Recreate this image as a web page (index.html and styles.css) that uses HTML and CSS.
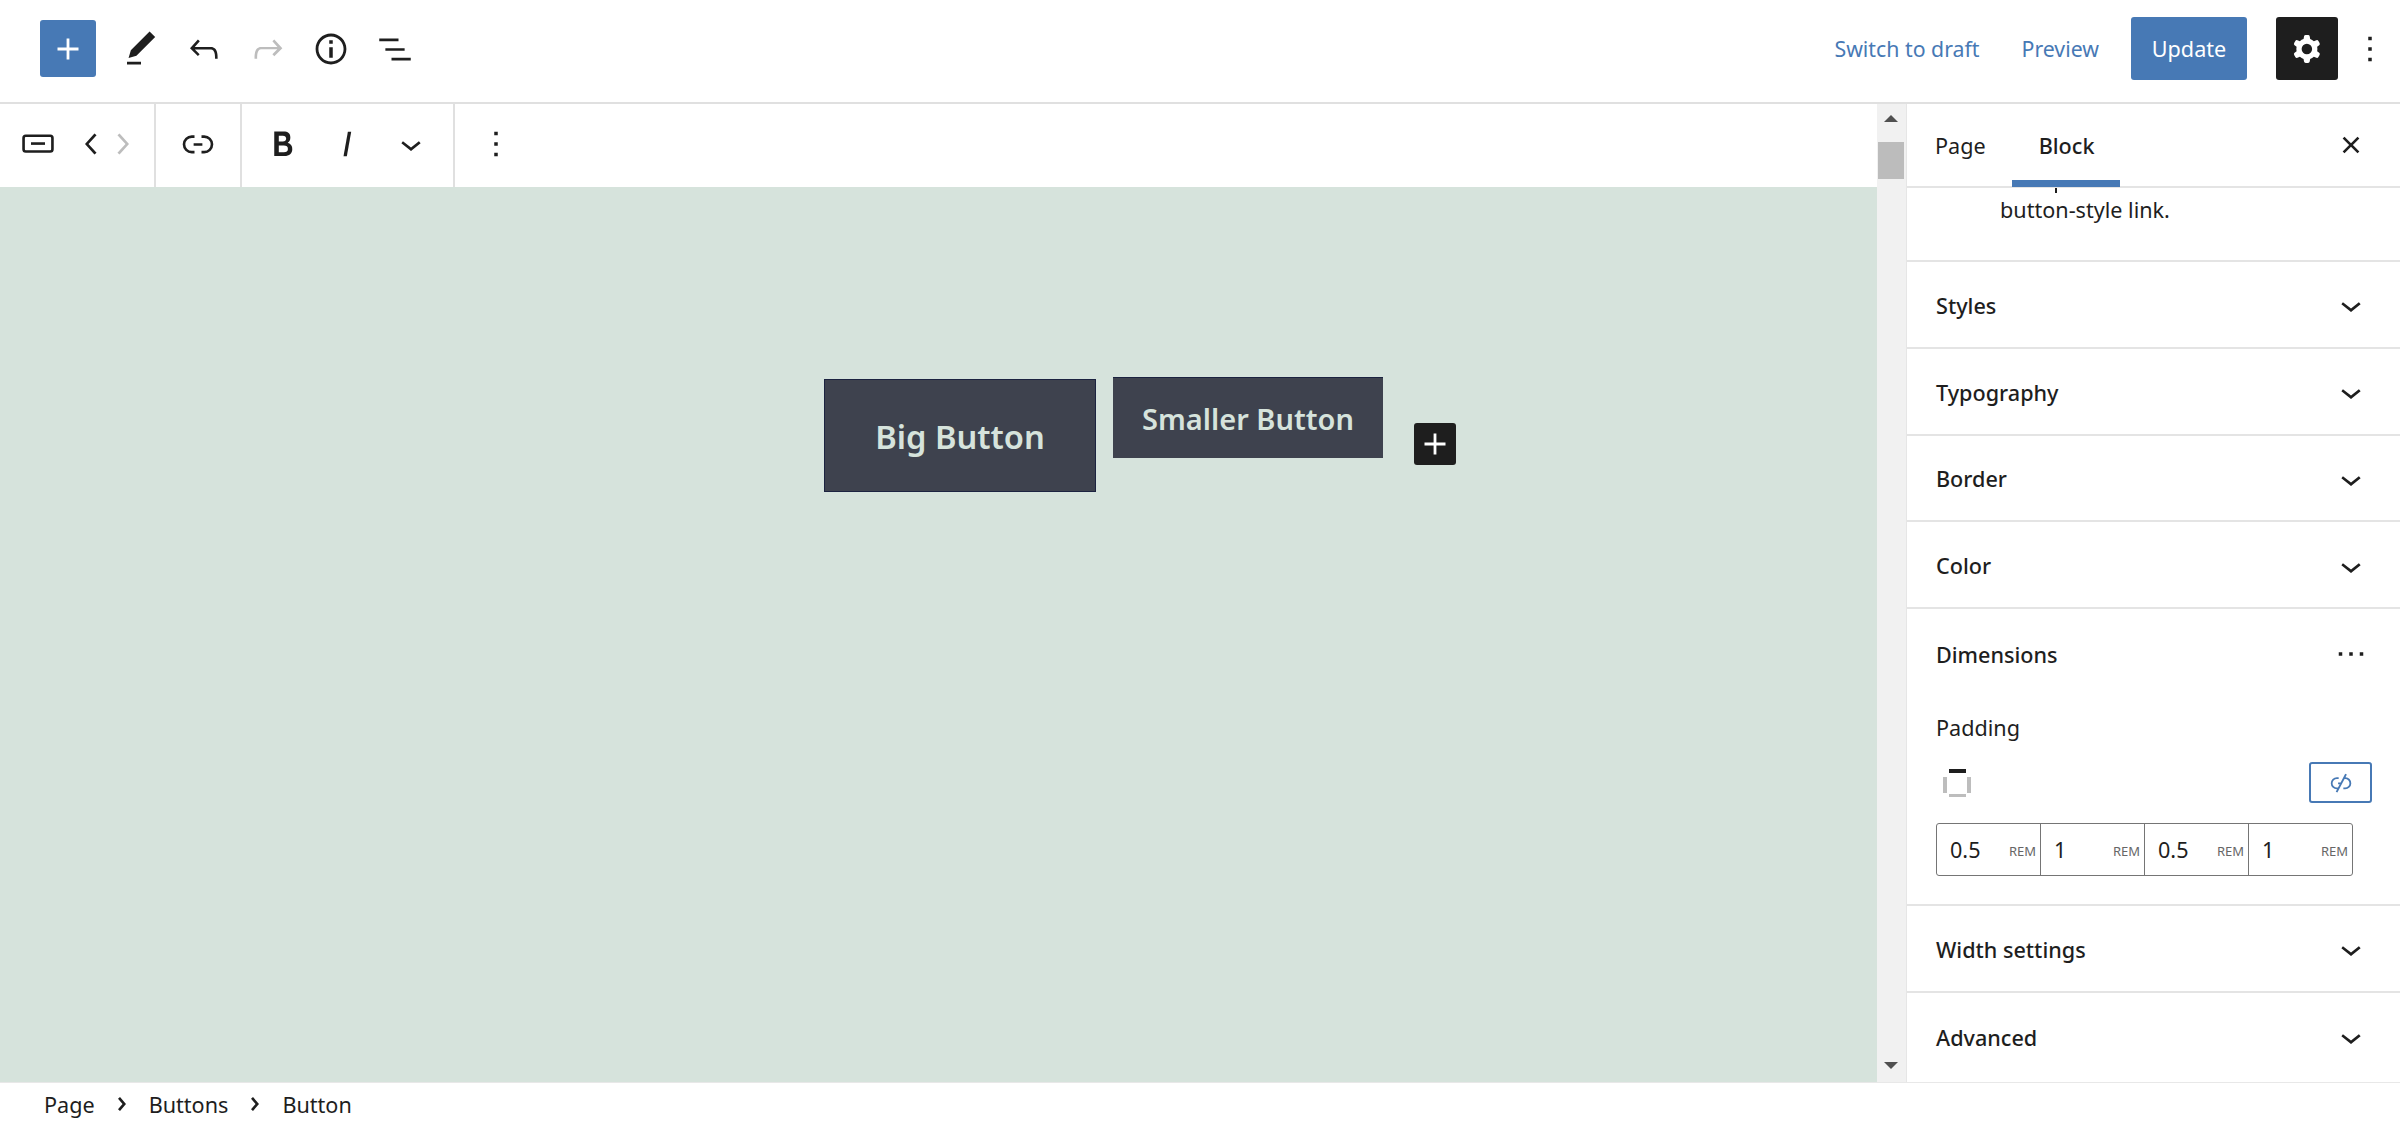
FILE: index.html
```html
<!DOCTYPE html>
<html lang="en">
<head>
    <meta charset="UTF-8">
    <title>Edit Page</title>
    <link rel="stylesheet" href="styles.css">
</head>
<body>

<header class="top-bar">
    <button class="inserter"><svg class="icon" viewBox="0 0 24 24"><path d="M18 11.2h-5.2V6h-1.6v5.2H6v1.6h5.2V18h1.6v-5.2H18z"/></svg></button>
    <div class="top-tools">
        <span class="tool"><svg class="icon" viewBox="0 0 24 24"><path d="M20.1 5.1L16.9 2 6.2 12.7l-1.3 4.4 4.5-1.3L20.1 5.1zM4 20.8h8v-1.5H4v1.5z"/></svg></span>
        <span class="tool"><svg class="icon" viewBox="0 0 24 24"><path d="M18.3 11.7c-.6-.6-1.4-.9-2.3-.9H6.7l2.9-3.3-1.1-1-4.5 5L8.5 16l1-1-2.7-2.7H16c.5 0 .9.2 1.3.5 1 1 1 3.4 1 4.5v.3h1.5v-.2c0-1.5 0-4.3-1.5-5.7z"/></svg></span>
        <span class="tool disabled"><svg class="icon" viewBox="0 0 24 24"><path d="M15.6 6.5l-1.1 1 2.9 3.3H8c-.9 0-1.7.3-2.3.9-1.4 1.5-1.4 4.2-1.4 5.6v.2h1.5v-.3c0-1.1 0-3.5 1-4.5.3-.3.7-.5 1.3-.5h9.2L14.5 15l1.1 1.1 4.6-4.6-4.6-5z"/></svg></span>
        <span class="tool"><svg class="icon" viewBox="0 0 24 24"><path d="M12 3.2c-4.8 0-8.8 3.9-8.8 8.8 0 4.8 3.9 8.8 8.8 8.8 4.8 0 8.8-3.9 8.8-8.8 0-4.8-4-8.8-8.8-8.8zm0 16c-4 0-7.2-3.3-7.2-7.2C4.8 8 8 4.8 12 4.8s7.2 3.3 7.2 7.2c0 4-3.2 7.2-7.2 7.2zM11 17h2v-6h-2v6zm0-8h2V7h-2v2z"/></svg></span>
        <span class="tool"><svg class="icon" viewBox="0 0 24 24"><path d="M3 6h11v1.5H3V6zm3.5 5.500h11V13h-11v-1.500zM21 17H10v1.500h11V17z"/></svg></span>
    </div>
    <div class="top-actions">
        <a class="link-btn draft">Switch to draft</a>
        <a class="link-btn preview">Preview</a>
        <button class="update">Update</button>
        <button class="settings"><svg class="icon" viewBox="0 0 24 24"><path fill-rule="evenodd" clip-rule="evenodd" d="M10.289 4.836A1 1 0 0111.275 4h1.306a1 1 0 01.987.836l.244 1.466c.787.26 1.503.679 2.108 1.218l1.393-.522a1 1 0 011.216.437l.653 1.13a1 1 0 01-.23 1.273l-1.148.944a6.025 6.025 0 010 2.435l1.149.946a1 1 0 01.23 1.272l-.653 1.13a1 1 0 01-1.216.437l-1.394-.522c-.605.54-1.32.958-2.108 1.218l-.244 1.466a1 1 0 01-.987.836h-1.306a1 1 0 01-.986-.836l-.244-1.466a5.995 5.995 0 01-2.108-1.218l-1.394.522a1 1 0 01-1.217-.436l-.653-1.131a1 1 0 01.23-1.272l1.149-.946a6.026 6.026 0 010-2.435l-1.148-.944a1 1 0 01-.23-1.272l.653-1.131a1 1 0 011.217-.437l1.393.522a5.994 5.994 0 012.108-1.218l.244-1.466zM14.929 12a3 3 0 11-6 0 3 3 0 016 0z"/></svg></button>
        <span class="top-more"><svg class="icon" viewBox="0 0 24 24"><path d="M13 19h-2v-2h2v2zm0-6h-2v-2h2v2zm0-6h-2V5h2v2z"/></svg></span>
    </div>
</header>

<main class="workspace">
    <section class="editor">
        <div class="block-toolbar">
            <div class="tb-group first">
                <span class="tb-btn block-type"><svg class="icon" viewBox="0 0 24 24"><path d="M8 12.500h8V11H8v1.500Z"/><path d="M19 6.500H5a2 2 0 0 0-2 2V15a2 2 0 0 0 2 2h14a2 2 0 0 0 2-2V8.500a2 2 0 0 0-2-2Zm.5 8.500a.5.5 0 0 1-.5.5H5a.5.5 0 0 1-.5-.5V8.500A.5.5 0 0 1 5 8h14a.5.5 0 0 1 .5.5V15Z"/></svg></span>
                <span class="tb-btn mover"><svg class="icon" viewBox="0 0 24 24"><path d="M14.6 7l-1.2-1L8 12l5.4 6 1.2-1-4.6-5z"/></svg></span>
                <span class="tb-btn mover disabled"><svg class="icon" viewBox="0 0 24 24"><path d="M10.6 6L9.4 7l4.6 5-4.6 5 1.2 1 5.4-6z"/></svg></span>
            </div>
            <div class="tb-group link-group">
                <span class="tb-btn wide"><svg class="icon" viewBox="0 0 24 24"><path d="M10 17.389H8.444A5.194 5.194 0 1 1 8.444 7H10v1.500H8.444a3.694 3.694 0 0 0 0 7.389H10v1.500ZM14 7h1.556a5.194 5.194 0 0 1 0 10.390H14v-1.500h1.556a3.694 3.694 0 0 0 0-7.390H14V7Zm-4.500 6h5v-1.500h-5V13Z"/></svg></span>
            </div>
            <div class="tb-group format-group">
                <span class="tb-btn"><svg class="icon" viewBox="0 0 24 24"><path d="M14.7 11.3c1-.6 1.5-1.6 1.5-3 0-2.3-1.3-3.4-4-3.4H7v14h5.8c1.4 0 2.5-.3 3.3-1 .8-.7 1.2-1.7 1.2-2.9.1-1.9-.8-3.1-2.6-3.7zm-5.1-4h2.3c.6 0 1.1.1 1.4.4.3.3.5.7.5 1.2s-.2 1-.5 1.2c-.3.3-.8.4-1.4.4H9.6V7.3zm4.6 9c-.4.3-1 .4-1.7.4H9.6v-3.9h2.9c.7 0 1.3.2 1.7.5.4.3.6.8.6 1.5s-.2 1.2-.6 1.5z"/></svg></span>
                <span class="tb-btn"><svg class="icon" viewBox="0 0 24 24"><path d="M12.5 5L10 19h1.9l2.5-14z"/></svg></span>
                <span class="tb-btn"><svg class="icon" viewBox="0 0 24 24"><path d="M17.5 11.6L12 16l-5.5-4.4.9-1.2L12 14l4.5-3.6 1 1.2z"/></svg></span>
            </div>
            <div class="tb-group more-group">
                <span class="tb-btn"><svg class="icon" viewBox="0 0 24 24"><path d="M13 19h-2v-2h2v2zm0-6h-2v-2h2v2zm0-6h-2V5h2v2z"/></svg></span>
            </div>
        </div>

        <div class="canvas">
            <a class="wp-btn big">Big Button</a>
            <a class="wp-btn small">Smaller Button</a>
            <button class="appender"><svg class="icon" viewBox="0 0 24 24"><path d="M18 11.2h-5.2V6h-1.6v5.2H6v1.6h5.2V18h1.6v-5.2H18z"/></svg></button>
        </div>
    </section>

    <div class="scrollbar">
        <span class="arrow-up"></span>
        <span class="thumb"></span>
        <span class="arrow-down"></span>
    </div>

    <aside class="sidebar">
        <div class="tabs">
            <span class="tab">Page</span>
            <span class="tab active">Block</span>
            <span class="close"><svg class="icon" viewBox="0 0 24 24"><path d="M12 13.06l3.712 3.713 1.061-1.06L13.061 12l3.712-3.712-1.06-1.06L12 10.938 8.288 7.227l-1.061 1.06L10.939 12l-3.712 3.712 1.06 1.061L12 13.061z"/></svg></span>
        </div>
        <div class="block-desc">
            <i class="clipped-mark"></i>
            <p>button-style link.</p>
        </div>

        <div class="panel-row"><span>Styles</span><svg class="icon" viewBox="0 0 24 24"><path d="M17.5 11.6L12 16l-5.5-4.4.9-1.2L12 14l4.5-3.6 1 1.2z"/></svg></div>
        <div class="panel-row"><span>Typography</span><svg class="icon" viewBox="0 0 24 24"><path d="M17.5 11.6L12 16l-5.5-4.4.9-1.2L12 14l4.5-3.6 1 1.2z"/></svg></div>
        <div class="panel-row"><span>Border</span><svg class="icon" viewBox="0 0 24 24"><path d="M17.5 11.6L12 16l-5.5-4.4.9-1.2L12 14l4.5-3.6 1 1.2z"/></svg></div>
        <div class="panel-row"><span>Color</span><svg class="icon" viewBox="0 0 24 24"><path d="M17.5 11.6L12 16l-5.5-4.4.9-1.2L12 14l4.5-3.6 1 1.2z"/></svg></div>

        <div class="dimensions">
            <div class="dim-title"><span>Dimensions</span><svg class="icon" viewBox="0 0 24 24"><path d="M11 13h2v-2h-2v2zm-6 0h2v-2H5v2zm12-2v2h2v-2h-2z"/></svg></div>
            <div class="dim-label">Padding</div>
            <div class="dim-controls">
                <svg class="side-icon" viewBox="0 0 28 28"><rect class="side-off" x="0" y="8" width="4" height="16"/><rect class="side-off" x="24" y="8" width="4" height="16"/><rect class="side-off" x="6" y="25" width="17" height="3"/><rect x="6" y="0" width="17" height="4"/></svg>
                <button class="unlink"><svg class="icon" viewBox="0 0 24 24"><path d="M17.031 4.703 15.576 4l-1.56 3H14v.03l-2.324 4.470H9.5V13h1.396l-1.502 2.889h-.95a3.694 3.694 0 0 1 0-7.389H10V7H8.444a5.194 5.194 0 1 0 0 10.389h.17L7.5 19.530l1.416.719L15.049 8.5h.507a3.694 3.694 0 0 1 0 7.390H14v1.500h1.556a5.194 5.194 0 0 0 .273-10.383l1.202-2.304Z"/></svg></button>
            </div>
            <div class="unit-inputs">
                <div class="unit-input"><span class="val">0.5</span><span class="unit">REM</span></div>
                <div class="unit-input"><span class="val">1</span><span class="unit">REM</span></div>
                <div class="unit-input"><span class="val">0.5</span><span class="unit">REM</span></div>
                <div class="unit-input"><span class="val">1</span><span class="unit">REM</span></div>
            </div>
        </div>

        <div class="panel-row"><span>Width settings</span><svg class="icon" viewBox="0 0 24 24"><path d="M17.5 11.6L12 16l-5.5-4.4.9-1.2L12 14l4.5-3.6 1 1.2z"/></svg></div>
        <div class="panel-row last"><span>Advanced</span><svg class="icon" viewBox="0 0 24 24"><path d="M17.5 11.6L12 16l-5.5-4.4.9-1.2L12 14l4.5-3.6 1 1.2z"/></svg></div>
    </aside>
</main>

<footer class="breadcrumbs">
    <span>Page</span>
    <svg class="icon crumb-sep" viewBox="0 0 24 24"><path d="M10.862 8.04l3.419 3.989-3.419 3.988-1.139-.976 2.582-3.012-2.582-3.012z"/></svg>
    <span>Buttons</span>
    <svg class="icon crumb-sep" viewBox="0 0 24 24"><path d="M10.862 8.04l3.419 3.989-3.419 3.988-1.139-.976 2.582-3.012-2.582-3.012z"/></svg>
    <span>Button</span>
</footer>

</body>
</html>
```

FILE: styles.css
```css
* {
    box-sizing: border-box;
}
body {
    margin: 0;
    height: 1122px;
    overflow: hidden;
    display: flex;
    flex-direction: column;
    background: #fff;
    color: #1e1e1e;
    font-family: "Noto Sans", sans-serif;
    font-size: 21.6px;
}
button {
    border: none;
    padding: 0;
    font: inherit;
    cursor: pointer;
}
.icon {
    width: 42px;
    height: 42px;
    fill: currentColor;
    flex: none;
}

/* top bar */
.top-bar {
    height: 104px;
    flex: none;
    display: flex;
    align-items: center;
    padding: 0 9px 5px 40px;
    border-bottom: 2px solid #e0e0e0;
}
.inserter {
    width: 56px;
    height: 57px;
    border-radius: 3px;
    background: #4779b5;
    color: #fff;
    display: flex;
    align-items: center;
    justify-content: center;
}
.top-tools {
    display: flex;
    margin-left: 13px;
}
.tool {
    width: 63.5px;
    height: 42px;
    display: flex;
    justify-content: center;
}
.disabled {
    color: #bdbdbd;
}
.top-actions {
    margin-left: auto;
    display: flex;
    align-items: center;
}
.link-btn {
    color: #4779b5;
    font-size: 21.3px;
}
.draft {
    margin-right: 42px;
}
.preview {
    margin-right: 32px;
}
.update {
    width: 116px;
    height: 63px;
    border-radius: 3px;
    background: #4779b5;
    color: #fff;
}
.settings {
    width: 62px;
    height: 63px;
    margin-left: 29px;
    border-radius: 3px;
    background: #1e1e1e;
    color: #fff;
    display: flex;
    align-items: center;
    justify-content: center;
}
.top-more {
    width: 42px;
    height: 42px;
    margin-left: 11px;
}

/* main area */
.workspace {
    flex: 1;
    min-height: 0;
    display: flex;
}
.editor {
    width: 1877px;
    flex: none;
    display: flex;
    flex-direction: column;
}
.block-toolbar {
    height: 83px;
    flex: none;
    display: flex;
}
.tb-group {
    display: flex;
    align-items: center;
    border-right: 2px solid #e0e0e0;
}
.tb-btn {
    width: 64px;
    height: 42px;
    margin-bottom: 4px;
    display: flex;
    justify-content: center;
}
.first {
    width: 156px;
    padding-left: 20px;
}
.block-type {
    width: 36px;
    margin-right: 21px;
}
.mover {
    width: 30px;
}
.link-group {
    width: 86px;
}
.link-group .tb-btn {
    width: 84px;
}
.format-group {
    width: 213px;
    padding-left: 9px;
}
.more-group {
    border-right: none;
    padding-left: 9px;
}
.canvas {
    flex: 1;
    background: #d6e3dc;
    display: flex;
    align-items: flex-start;
    padding: 190px 0 0 824px;
}
.wp-btn {
    background: #3e424e;
    color: #d6e3dc;
    font-weight: 600;
    display: flex;
    align-items: center;
    justify-content: center;
}
.big {
    width: 272px;
    height: 113px;
    margin-top: 2px;
    padding-top: 2px;
    border: 1px solid #1c2340;
    font-size: 32.7px;
}
.small {
    width: 270px;
    height: 81px;
    margin-left: 17px;
    padding-top: 1px;
    border-top: 1px solid #1c2340;
    font-size: 29px;
}
.appender {
    width: 42px;
    height: 42px;
    margin: 46px 0 0 31px;
    border-radius: 3px;
    background: #1e1e1e;
    color: #fff;
    display: flex;
    align-items: center;
    justify-content: center;
}

/* scrollbar */
.scrollbar {
    width: 30px;
    flex: none;
    background: #f1f1f1;
    padding: 11px 2px 0 1px;
    display: flex;
    flex-direction: column;
    align-items: center;
    border-right: 1px solid #e6e6e6;
}
.arrow-up {
    border: 7px solid transparent;
    border-top: none;
    border-bottom: 7px solid #505050;
}
.thumb {
    width: 100%;
    height: 37px;
    margin-top: 20px;
    background: #bcbcbc;
}
.arrow-down {
    margin-top: auto;
    margin-bottom: 13px;
    border: 7px solid transparent;
    border-bottom: none;
    border-top: 7px solid #505050;
}

/* sidebar */
.sidebar {
    flex: 1;
    position: relative;
}
.tabs {
    height: 84px;
    display: flex;
    align-items: stretch;
    border-bottom: 2px solid #e4e4e4;
    padding-left: 28px;
}
.tab {
    display: flex;
    align-items: center;
    margin-right: 53px;
}
.tab.active {
    position: relative;
    font-weight: 500;
}
.tab.active::after {
    content: "";
    position: absolute;
    left: -27px;
    right: -26px;
    bottom: -1px;
    height: 7px;
    background: #4779b5;
}
.close {
    margin-left: auto;
    margin-right: 28px;
    align-self: center;
    height: 42px;
}
.block-desc {
    height: 74px;
    padding: 7px 0 0 93px;
    border-bottom: 2px solid #e4e4e4;
}
.block-desc p {
    margin: 0;
    line-height: 30px;
}
.clipped-mark {
    position: absolute;
    left: 148px;
    top: 84px;
    width: 2px;
    height: 5px;
    background: #1e1e1e;
}
.panel-row {
    height: 86.75px;
    display: flex;
    align-items: center;
    justify-content: space-between;
    padding: 2px 28px 0 29px;
    border-bottom: 2px solid #e4e4e4;
    font-weight: 500;
}
.panel-row.last {
    border-bottom: none;
}
.dimensions {
    height: 297px;
    padding: 24px 28px 0 29px;
    border-bottom: 2px solid #e4e4e4;
}
.dim-title {
    height: 42px;
    display: flex;
    align-items: center;
    justify-content: space-between;
    font-weight: 500;
}
.dim-label {
    margin-top: 38px;
    line-height: 30px;
}
.dim-controls {
    margin-top: 19px;
    display: flex;
    align-items: center;
    justify-content: space-between;
    padding-left: 7px;
}
.side-icon {
    width: 28px;
    height: 28px;
    fill: #1e1e1e;
}
.side-off {
    fill: #bdbdbd;
}
.unlink {
    width: 63px;
    height: 41px;
    border: 2px solid #4779b5;
    border-radius: 3px;
    background: #fff;
    color: #4779b5;
    display: flex;
    align-items: center;
    justify-content: center;
}
.unlink .icon {
    width: 28px;
    height: 28px;
}
.unit-inputs {
    margin-top: 20px;
    width: 417px;
    height: 53px;
    display: flex;
    border: 1px solid #757575;
    border-radius: 3px;
}
.unit-input {
    flex: 1;
    display: flex;
    align-items: center;
    justify-content: space-between;
    padding: 0 4px 0 13px;
    border-right: 1px solid #757575;
}
.unit-input:last-child {
    border-right: none;
}
.unit {
    font-size: 13px;
    color: #666;
    margin-top: 3px;
}

/* footer */
.breadcrumbs {
    height: 40px;
    flex: none;
    display: flex;
    align-items: center;
    padding: 3px 0 0 44px;
    border-top: 1px solid #e8e8e8;
}
.crumb-sep {
    margin: 0 6px;
}
```
